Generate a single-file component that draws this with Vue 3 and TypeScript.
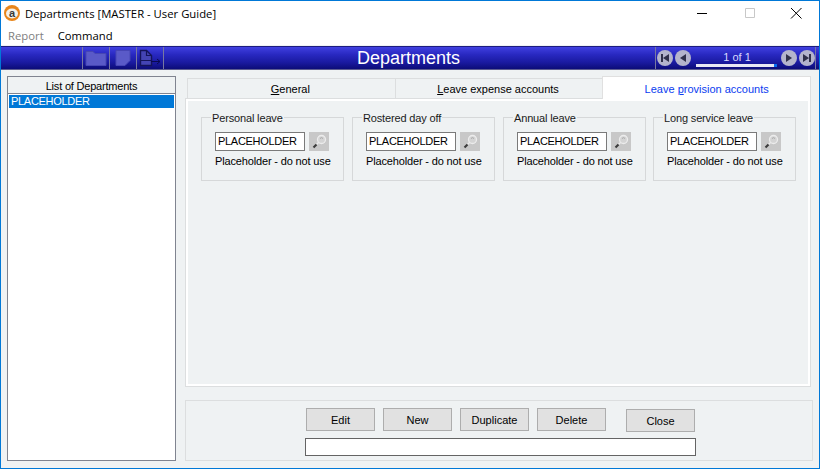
<script setup lang="ts">
interface LeaveGroup {
  title: string;
  code: string;
  note: string;
}

const groups: LeaveGroup[] = [
  { title: 'Personal leave', code: 'PLACEHOLDER', note: 'Placeholder - do not use' },
  { title: 'Rostered day off', code: 'PLACEHOLDER', note: 'Placeholder - do not use' },
  { title: 'Annual leave', code: 'PLACEHOLDER', note: 'Placeholder - do not use' },
  { title: 'Long service leave', code: 'PLACEHOLDER', note: 'Placeholder - do not use' }
];

const actions = ['Edit', 'New', 'Duplicate', 'Delete'];
</script>

<template>
  <div class="window">
    <div class="titlebar">
      <svg class="app-logo" width="16" height="16" viewBox="0 0 16 16">
        <circle cx="8" cy="8" r="8" fill="#e8851a" />
        <ellipse cx="8" cy="8.500" rx="6" ry="5" fill="#f4f1ea" />
        <text x="8" y="12" text-anchor="middle" class="logo-a">a</text>
      </svg>
      <span class="title-text">Departments [MASTER - User Guide]</span>
      <div class="caption-buttons">
        <svg class="caption" width="46" height="24" viewBox="0 0 46 24"><path d="M16 12.500h10" stroke="#000" /></svg>
        <svg class="caption" width="46" height="24" viewBox="0 0 46 24"><path d="M18.500 7.500h9v9h-9z" fill="none" stroke="#c8c8c8" /></svg>
        <svg class="caption" width="46" height="24" viewBox="0 0 46 24"><path d="M18 7l10.500 10.500M28.500 7L18 17.500" stroke="#000" /></svg>
      </div>
    </div>

    <div class="menubar">
      <span class="menu-item disabled">Report</span>
      <span class="menu-item">Command</span>
    </div>

    <div class="toolbar">
      <div class="tool-spacer"></div>
      <div class="tool-btn">
        <svg width="22" height="18" viewBox="0 0 22 18">
          <path d="M1 2.500h7l2 2h11v12H1z" fill="#5a5ac8" stroke="#4646b4" />
        </svg>
      </div>
      <div class="tool-btn">
        <svg width="18" height="18" viewBox="0 0 18 18">
          <path d="M2 1.500h14v10l-5 5H2z" fill="#5a5ac8" stroke="#4646b4" />
        </svg>
      </div>
      <div class="tool-btn">
        <svg width="24" height="18" viewBox="0 0 24 18">
          <path d="M2.500 1.500h6l5 5v10h-11z" fill="#4444b4" stroke="#14145a" stroke-width="1.400" />
          <path d="M8.500 1.500v5h5M2.500 11.500h11" fill="none" stroke="#14145a" stroke-width="1.200" />
          <path d="M13 12.500h9M19 10l3 2.500-3 2.500" fill="none" stroke="#0a0a50" />
        </svg>
      </div>
      <div class="toolbar-title">Departments</div>
      <div class="nav-box">
        <span class="nav-btn">
          <svg width="12" height="12" viewBox="0 0 12 12"><path d="M2 2h2v8H2zM10 2v8L4 6z" fill="#30304a" /></svg>
        </span>
        <span class="nav-btn">
          <svg width="12" height="12" viewBox="0 0 12 12"><path d="M9 2v8L3 6z" fill="#30304a" /></svg>
        </span>
        <div class="nav-count">
          <span class="nav-label">1 of 1</span>
          <div class="nav-track"><div class="nav-thumb"></div></div>
        </div>
        <span class="nav-btn">
          <svg width="12" height="12" viewBox="0 0 12 12"><path d="M3 2v8l6-4z" fill="#30304a" /></svg>
        </span>
        <span class="nav-btn">
          <svg width="12" height="12" viewBox="0 0 12 12"><path d="M8 2h2v8H8zM2 2v8l6-4z" fill="#30304a" /></svg>
        </span>
      </div>
    </div>

    <div class="content">
      <div class="list-panel">
        <div class="list-header">List of Departments</div>
        <div class="list-row">PLACEHOLDER</div>
      </div>

      <div class="main-col">
        <div class="tabs">
          <div class="tab"><u>G</u>eneral</div>
          <div class="tab"><u>L</u>eave expense accounts</div>
          <div class="tab active">Leave <u>p</u>rovision accounts</div>
        </div>
        <div class="tab-panel">
          <fieldset v-for="group in groups" :key="group.title" class="group">
            <legend>{{ group.title }}</legend>
            <div class="field-row">
              <div class="code-input">{{ group.code }}</div>
              <div class="lookup">
                <svg width="18" height="18" viewBox="0 0 18 18">
                  <circle cx="11.500" cy="6.500" r="4" fill="#d4d4d4" stroke="#ececec" stroke-width="1.300" />
                  <path d="M8.500 9.500l-2 2" stroke="#ececec" stroke-width="1.500" />
                  <path d="M6.500 11.500l-3 3" stroke="#3c3c3c" stroke-width="2.200" />
                  <path d="M10 5.500a2 2 0 0 1 3 0" fill="none" stroke="#a8a8a8" />
                </svg>
              </div>
            </div>
            <div class="note">{{ group.note }}</div>
          </fieldset>
        </div>

        <div class="action-panel">
          <div class="action-row">
            <button v-for="action in actions" :key="action" class="action-btn">{{ action }}</button>
            <button class="action-btn close-btn">Close</button>
          </div>
          <div class="status-box"></div>
        </div>
      </div>
    </div>
  </div>
</template>

<style scoped>
.window {
  width: 820px;
  height: 469px;
  box-sizing: border-box;
  border: 1px solid #0078d7;
  background: #eff2f3;
  display: flex;
  flex-direction: column;
  overflow: hidden;
  font-family: "Liberation Sans", Arial, sans-serif;
  font-size: 11px;
  color: #000;
}

.titlebar {
  height: 24px;
  background: #fff;
  display: flex;
  align-items: center;
  padding-left: 3px;
  flex-shrink: 0;
}

.app-logo {
  flex-shrink: 0;
}

.logo-a {
  font-family: "Liberation Sans", sans-serif;
  font-size: 11px;
  font-weight: 700;
  fill: #3a3a3a;
}

.title-text {
  margin-left: 5px;
  font-family: "Open Sans", "Noto Sans", sans-serif;
  font-size: 11.3px;
}

.caption-buttons {
  margin-left: auto;
  display: flex;
}

.caption {
  display: block;
}

.menubar {
  height: 20px;
  background: #fff;
  display: flex;
  align-items: center;
  padding-left: 7px;
  gap: 14px;
  font-family: "Open Sans", "Noto Sans", sans-serif;
  font-size: 11.3px;
  flex-shrink: 0;
}

.menu-item.disabled {
  color: #808080;
}

.toolbar {
  margin-top: 1px;
  height: 24px;
  flex-shrink: 0;
  display: flex;
  align-items: stretch;
  background: linear-gradient(to bottom, #4040e0 0%, #2828c0 35%, #1a1aa0 70%, #0c0c78 100%);
  border-top: 1px solid #1c1c80;
  border-bottom: 1px solid #5c5c90;
  box-sizing: border-box;
}

.tool-spacer {
  width: 81px;
}

.tool-btn {
  width: 27px;
  box-sizing: border-box;
  border-left: 1px solid #7878a0;
  display: flex;
  align-items: center;
  justify-content: center;
}

.tool-btn:nth-of-type(4) {
  border-right: 1px solid #7878a0;
  width: 28px;
}

.toolbar-title {
  flex: 1;
  text-align: center;
  color: #fff;
  font-size: 18px;
  line-height: 22px;
  padding-right: 2px;
}

.nav-box {
  width: 161px;
  margin-right: 3px;
  box-sizing: border-box;
  border-left: 1px solid #7878a0;
  border-right: 1px solid #7878a0;
  display: flex;
  align-items: center;
  padding: 0 0 0 1px;
  gap: 2px;
}

.nav-btn {
  width: 16px;
  height: 16px;
  border-radius: 50%;
  background: #b4b4cc;
  display: flex;
  align-items: center;
  justify-content: center;
  flex-shrink: 0;
}

.nav-count {
  flex: 1;
  display: flex;
  flex-direction: column;
  align-items: center;
  margin-top: 1px;
}

.nav-label {
  color: #d8d8ff;
  font-size: 11px;
  height: 14px;
  line-height: 15px;
  padding-left: 2px;
}

.nav-track {
  width: 81px;
  height: 3px;
  background: #e8e8f4;
  position: relative;
}

.nav-thumb {
  position: absolute;
  right: 0;
  top: 0;
  width: 3px;
  height: 3px;
  background: #0a6cf0;
}

.content {
  flex: 1;
  display: flex;
  padding: 6px 6px 7px 6px;
  gap: 9px;
  min-height: 0;
}

.list-panel {
  width: 169px;
  box-sizing: border-box;
  border: 1px solid #808490;
  background: #fff;
  padding: 0 1px;
  flex-shrink: 0;
}

.list-header {
  height: 16px;
  line-height: 18px;
  text-align: center;
  background: #eff2f3;
  margin: 0 -1px;
  border-bottom: 1px solid #808490;
  box-sizing: content-box;
  letter-spacing: -0.2px;
}

.list-row {
  margin-top: 1px;
  height: 13px;
  line-height: 13px;
  background: #0078d7;
  color: #fff;
  padding-left: 2px;
  letter-spacing: -0.3px;
}

.main-col {
  flex: 1;
  display: flex;
  flex-direction: column;
  min-width: 0;
}

.tabs {
  display: flex;
  margin-left: 2px;
  margin-right: 2px;
  height: 20px;
  flex-shrink: 0;
  margin-top: 2px;
}

.tab {
  flex: 1;
  text-align: center;
  text-indent: -2px;
  line-height: 20px;
  background: #eff2f3;
  border-top: 1px solid #dcdedf;
  border-left: 1px solid #dcdedf;
  box-sizing: border-box;
}

.tab.active {
  background: #fff;
  color: #0a3cf0;
  text-indent: 0;
  border-color: #e0e0e0;
  border-right: 1px solid #dcdedf;
  margin-top: -2px;
  padding-top: 2px;
  height: 23px;
  position: relative;
}

.tab-panel {
  height: 289px;
  box-sizing: border-box;
  margin-right: 2px;
  background: #eff2f3;
  border: 3px solid #fff;
  outline: 1px solid #dcdedf;
  outline-offset: -1px;
  padding: 9px 0 0 13px;
  display: flex;
  align-items: flex-start;
  gap: 8px;
  flex-shrink: 0;
}

.group {
  width: 143px;
  min-width: 0;
  height: 71px;
  box-sizing: border-box;
  border: 1px solid #d6d8d9;
  margin: 0;
  padding: 0 0 0 13px;
  flex-shrink: 0;
}

.group:last-child {
  margin-left: -1px;
}

.group legend {
  padding: 0 1px;
  margin-left: -4px;
  height: 14px;
  line-height: 16px;
  color: #1a1a1a;
  letter-spacing: -0.15px;
}

.field-row {
  display: flex;
  gap: 4px;
  margin-top: 8px;
}

.code-input {
  width: 90px;
  height: 19px;
  box-sizing: border-box;
  border: 1px solid #7a7a7a;
  background: #fff;
  line-height: 17px;
  padding-left: 2px;
  white-space: nowrap;
  letter-spacing: -0.3px;
}

.lookup {
  width: 20px;
  height: 19px;
  background: #c8c8c8;
  display: flex;
  align-items: center;
  justify-content: center;
}

.note {
  margin-top: 3px;
  line-height: 14px;
  white-space: nowrap;
  letter-spacing: -0.15px;
}

.action-panel {
  margin-top: 13px;
  height: 61px;
  box-sizing: border-box;
  border: 1px solid #dcdedf;
  padding: 7px 0 0 120px;
}

.action-row {
  display: flex;
  gap: 8px;
  align-items: flex-start;
}

.action-btn {
  width: 69px;
  height: 23px;
  box-sizing: border-box;
  border: 1px solid #adadad;
  background: #e1e1e1;
  font: inherit;
  color: #000;
  padding: 0;
}

.close-btn {
  margin-left: 12px;
  margin-top: 1px;
}

.status-box {
  width: 391px;
  height: 18px;
  box-sizing: border-box;
  margin-top: 6px;
  margin-left: -1px;
  border: 1px solid #646464;
  background: #fff;
}
</style>
